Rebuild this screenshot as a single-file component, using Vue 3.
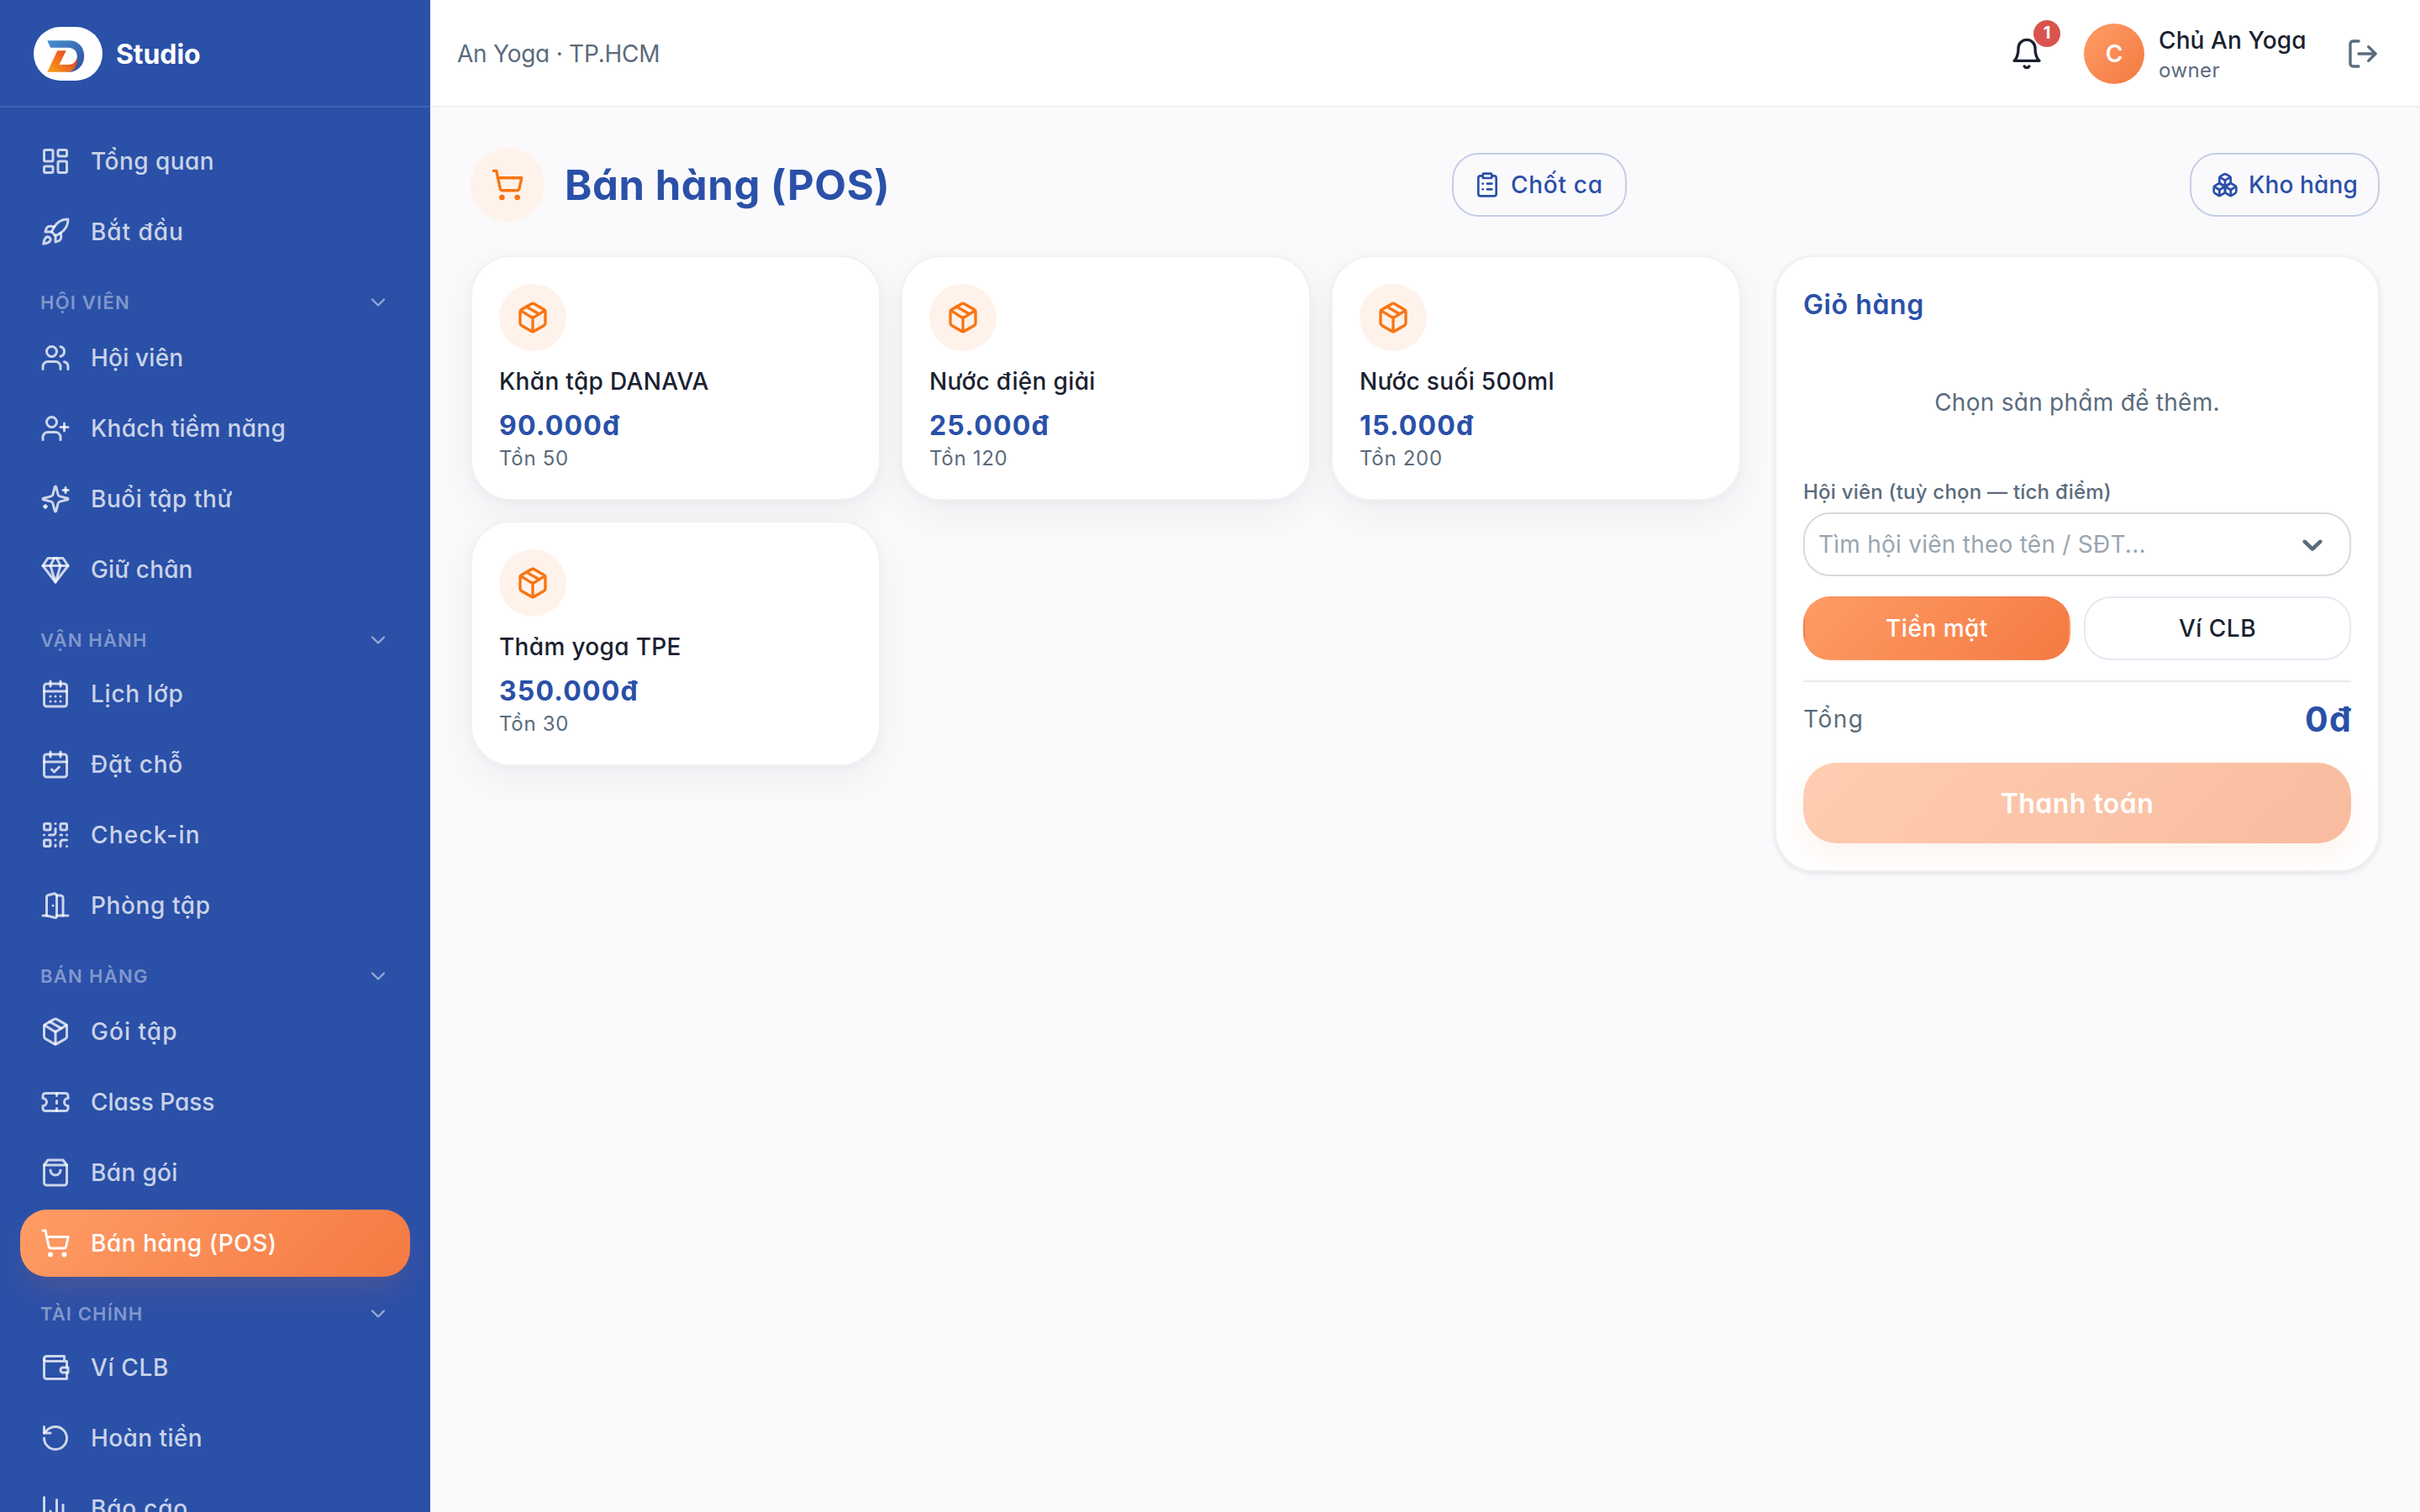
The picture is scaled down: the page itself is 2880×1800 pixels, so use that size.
<script setup>
const dot = (x, y) => `M${x} ${y}h.01`

const icons = {
  dashboard: ['M4 3h5a1 1 0 0 1 1 1v7a1 1 0 0 1-1 1H4a1 1 0 0 1-1-1V4a1 1 0 0 1 1-1z', 'M15 3h5a1 1 0 0 1 1 1v3a1 1 0 0 1-1 1h-5a1 1 0 0 1-1-1V4a1 1 0 0 1 1-1z', 'M15 12h5a1 1 0 0 1 1 1v7a1 1 0 0 1-1 1h-5a1 1 0 0 1-1-1v-7a1 1 0 0 1 1-1z', 'M4 16h5a1 1 0 0 1 1 1v3a1 1 0 0 1-1 1H4a1 1 0 0 1-1-1v-3a1 1 0 0 1 1-1z'],
  rocket: ['M4.5 16.5c-1.5 1.26-2 5-2 5s3.74-.5 5-2c.71-.84.7-2.13-.09-2.91a2.18 2.18 0 0 0-2.91-.09z', 'm12 15-3-3a22 22 0 0 1 2-3.95A12.88 12.88 0 0 1 22 2c0 2.72-.78 7.5-6 11a22.35 22.35 0 0 1-4 2z', 'M9 12H4s.55-3.03 2-4c1.62-1.08 5 0 5 0', 'M12 15v5s3.03-.55 4-2c1.08-1.62 0-5 0-5'],
  users: ['M16 21v-2a4 4 0 0 0-4-4H6a4 4 0 0 0-4 4v2', 'M13 7a4 4 0 1 1-8 0 4 4 0 0 1 8 0z', 'M22 21v-2a4 4 0 0 0-3-3.87', 'M16 3.13a4 4 0 0 1 0 7.75'],
  userPlus: ['M16 21v-2a4 4 0 0 0-4-4H6a4 4 0 0 0-4 4v2', 'M13 7a4 4 0 1 1-8 0 4 4 0 0 1 8 0z', 'M19 8v6', 'M22 11h-6'],
  sparkles: ['M9.937 15.5A2 2 0 0 0 8.5 14.063l-6.135-1.582a.5.5 0 0 1 0-.962L8.5 9.936A2 2 0 0 0 9.937 8.5l1.582-6.135a.5.5 0 0 1 .963 0L14.063 8.5A2 2 0 0 0 15.5 9.937l6.135 1.581a.5.5 0 0 1 0 .964L15.5 14.063a2 2 0 0 0-1.437 1.437l-1.582 6.135a.5.5 0 0 1-.963 0z', 'M20 3v4', 'M22 5h-4', 'M4 17v2', 'M5 18H3'],
  gem: ['M6 3h12l4 6-10 13L2 9Z', 'M11 3 8 9l4 13 4-13-3-6', 'M2 9h20'],
  calendar: ['M8 2v4', 'M16 2v4', 'M5 4h14a2 2 0 0 1 2 2v14a2 2 0 0 1-2 2H5a2 2 0 0 1-2-2V6a2 2 0 0 1 2-2z', 'M3 10h18', dot(8, 14), dot(12, 14), dot(16, 14), dot(8, 18), dot(12, 18), dot(16, 18)],
  calendarCheck: ['M8 2v4', 'M16 2v4', 'M5 4h14a2 2 0 0 1 2 2v14a2 2 0 0 1-2 2H5a2 2 0 0 1-2-2V6a2 2 0 0 1 2-2z', 'M3 10h18', 'm9 16 2 2 4-4'],
  qr: ['M4 3h3a1 1 0 0 1 1 1v3a1 1 0 0 1-1 1H4a1 1 0 0 1-1-1V4a1 1 0 0 1 1-1z', 'M17 3h3a1 1 0 0 1 1 1v3a1 1 0 0 1-1 1h-3a1 1 0 0 1-1-1V4a1 1 0 0 1 1-1z', 'M4 16h3a1 1 0 0 1 1 1v3a1 1 0 0 1-1 1H4a1 1 0 0 1-1-1v-3a1 1 0 0 1 1-1z', 'M21 16h-3a2 2 0 0 0-2 2v3', 'M21 21v.01', 'M12 7v3a2 2 0 0 1-2 2H7', 'M3 12h.01', 'M12 3h.01', 'M12 16v.01', 'M16 12h1', 'M21 12v.01', 'M12 21v-1'],
  door: ['M13 4h3a2 2 0 0 1 2 2v14', 'M2 20h3', 'M13 20h9', 'M10 12v.01', 'M13 4.562v16.157a1 1 0 0 1-1.242.97L5 20V5.562a2 2 0 0 1 1.515-1.94l4-1A2 2 0 0 1 13 4.561Z'],
  box: ['M11 21.73a2 2 0 0 0 2 0l7-4A2 2 0 0 0 21 16V8a2 2 0 0 0-1-1.73l-7-4a2 2 0 0 0-2 0l-7 4A2 2 0 0 0 3 8v8a2 2 0 0 0 1 1.73z', 'M12 22V12', 'm3.3 7 7.703 4.734a2 2 0 0 0 1.994 0L20.7 7', 'm7.5 4.27 9 5.15'],
  ticket: ['M2 9a3 3 0 0 1 0 6v2a2 2 0 0 0 2 2h16a2 2 0 0 0 2-2v-2a3 3 0 0 1 0-6V7a2 2 0 0 0-2-2H4a2 2 0 0 0-2 2Z', 'M13 5v2', 'M13 17v2', 'M13 11v2'],
  bag: ['M6 2 3 6v14a2 2 0 0 0 2 2h14a2 2 0 0 0 2-2V6l-3-4Z', 'M3 6h18', 'M16 10a4 4 0 0 1-8 0'],
  cart: ['M9 21a1 1 0 1 1-2 0 1 1 0 0 1 2 0z', 'M20 21a1 1 0 1 1-2 0 1 1 0 0 1 2 0z', 'M2.05 2.05h2l2.66 12.42a2 2 0 0 0 2 1.58h9.78a2 2 0 0 0 1.95-1.57l1.65-7.43H5.12'],
  wallet: ['M21 12V7H5a2 2 0 0 1 0-4h14v4', 'M3 5v14a2 2 0 0 0 2 2h16v-5', 'M18 12a2 2 0 0 0 0 4h4v-4Z'],
  undo: ['M3 12a9 9 0 1 0 9-9 9.75 9.75 0 0 0-6.74 2.74L3 8', 'M3 3v5h5'],
  chart: ['M3 3v16a2 2 0 0 0 2 2h16', 'M18 17V9', 'M13 17V5', 'M8 17v-3'],
  chevron: ['m6 9 6 6 6-6'],
  bell: ['M6 8a6 6 0 0 1 12 0c0 7 3 9 3 9H3s3-2 3-9', 'M10.3 21a1.94 1.94 0 0 0 3.4 0'],
  logout: ['M9 21H5a2 2 0 0 1-2-2V5a2 2 0 0 1 2-2h4', 'm16 17 5-5-5-5', 'M21 12H9'],
  clipboard: ['M9 2h6a1 1 0 0 1 1 1v2a1 1 0 0 1-1 1H9a1 1 0 0 1-1-1V3a1 1 0 0 1 1-1z', 'M16 4h2a2 2 0 0 1 2 2v14a2 2 0 0 1-2 2H6a2 2 0 0 1-2-2V6a2 2 0 0 1 2-2h2', 'M12 11h4', 'M12 16h4', 'M8 11h.01', 'M8 16h.01'],
  boxes: ['M2.97 12.92A2 2 0 0 0 2 14.63v3.24a2 2 0 0 0 .97 1.71l3 1.8a2 2 0 0 0 2.06 0L12 19v-5.5l-5-3-4.03 2.42Z', 'm7 16.5-4.74-2.85', 'm7 16.5 5-3', 'M7 16.5v5.17', 'M12 13.5V19l3.97 2.38a2 2 0 0 0 2.06 0l3-1.8a2 2 0 0 0 .97-1.71v-3.24a2 2 0 0 0-.97-1.71L17 10.5l-5 3Z', 'm17 16.5-5-3', 'm17 16.5 4.74-2.85', 'M17 16.5v5.17', 'M7.97 4.42A2 2 0 0 0 7 6.13v4.37l5 3 5-3V6.13a2 2 0 0 0-.97-1.71l-3-1.8a2 2 0 0 0-2.06 0l-3 1.8Z', 'M12 8 7.26 5.15', 'm12 8 4.74-2.85', 'M12 13.5V8'],
}

// ls: tracking in px for each label
const groups = [
  { items: [
    { label: 'Tổng quan', icon: 'dashboard', ls: 0.45 },
    { label: 'Bắt đầu', icon: 'rocket', ls: 0.95 },
  ] },
  { title: 'HỘI VIÊN', ls: 1.23, items: [
    { label: 'Hội viên', icon: 'users', ls: 0.2 },
    { label: 'Khách tiềm năng', icon: 'userPlus', ls: 0.3 },
    { label: 'Buổi tập thử', icon: 'sparkles', ls: 0.55 },
    { label: 'Giữ chân', icon: 'gem', ls: 0.16 },
  ] },
  { title: 'VẬN HÀNH', ls: 1.18, items: [
    { label: 'Lịch lớp', icon: 'calendar', ls: 0.75 },
    { label: 'Đặt chỗ', icon: 'calendarCheck', ls: 0.8 },
    { label: 'Check-in', icon: 'qr', ls: 1.2 },
    { label: 'Phòng tập', icon: 'door', ls: 0.6 },
  ] },
  { title: 'BÁN HÀNG', ls: 1.3, items: [
    { label: 'Gói tập', icon: 'box', ls: 1.05 },
    { label: 'Class Pass', icon: 'ticket', ls: -0.04 },
    { label: 'Bán gói', icon: 'bag', ls: 0.35 },
    { label: 'Bán hàng (POS)', icon: 'cart', ls: 0.54, active: true },
  ] },
  { title: 'TÀI CHÍNH', ls: 1.13, items: [
    { label: 'Ví CLB', icon: 'wallet', ls: 0.65 },
    { label: 'Hoàn tiền', icon: 'undo', ls: 0.42 },
    { label: 'Báo cáo', icon: 'chart', ls: 0.8 },
  ] },
]

const products = [
  { name: 'Khăn tập DANAVA', price: '90.000đ', stock: 50 },
  { name: 'Nước điện giải', price: '25.000đ', stock: 120 },
  { name: 'Nước suối 500ml', price: '15.000đ', stock: 200 },
  { name: 'Thảm yoga TPE', price: '350.000đ', stock: 30 },
]
</script>

<template>
  <div class="app">
    <aside class="sidebar">
      <div class="brand">
        <span class="logo">
          <svg viewBox="0 0 82 64" width="82" height="64">
            <defs>
              <linearGradient id="lgBlue" x1="0" y1="0" x2="1" y2="1">
                <stop offset="0" stop-color="#4690cf" />
                <stop offset="0.55" stop-color="#3a6db3" />
                <stop offset="1" stop-color="#2c4d9c" />
              </linearGradient>
              <linearGradient id="lgOrange" x1="0" y1="0.9" x2="1" y2="0.3">
                <stop offset="0" stop-color="#f6a01a" />
                <stop offset="0.5" stop-color="#f0701f" />
                <stop offset="1" stop-color="#e63d25" />
              </linearGradient>
            </defs>
            <path d="M16.3 16.3H42C53 16.3 60.2 24 60.2 34.5C60.2 45.5 52.5 53.8 42 53.8L41 48C48 45.5 52 40 51.8 35C51.5 28.5 47.5 24.8 41 24.8H20Z" fill="url(#lgBlue)" />
            <path d="M28.3 28.3H38.8L30.5 45H42C47 45 51 41 51.8 36.5C52.8 45 47.5 53.8 41 53.8H16.3Z" fill="url(#lgOrange)" />
          </svg>
        </span>
        <span class="brand-name">Studio</span>
      </div>
      <nav class="nav">
        <div v-for="(g, gi) in groups" :key="gi" class="group">
          <div v-if="g.title" class="group-head">
            <span :style="{ letterSpacing: g.ls + 'px' }">{{ g.title }}</span>
            <svg class="ico" viewBox="0 0 24 24" width="28" height="28"><path :d="icons.chevron[0]" /></svg>
          </div>
          <a v-for="it in g.items" :key="it.label" class="item" :class="{ active: it.active }">
            <svg class="ico" viewBox="0 0 24 24" width="36" height="36"><path v-for="d in icons[it.icon]" :key="d" :d="d" /></svg>
            <span :style="{ letterSpacing: it.ls + 'px' }">{{ it.label }}</span>
          </a>
        </div>
      </nav>
    </aside>

    <div class="main">
      <header class="topbar">
        <span class="branch">An Yoga · TP.HCM</span>
        <div class="tools">
          <span class="bell">
            <svg class="ico" viewBox="0 0 24 24" width="40" height="40"><path v-for="d in icons.bell" :key="d" :d="d" /></svg>
            <span class="badge">1</span>
          </span>
          <span class="avatar">C</span>
          <div class="who">
            <span class="who-name">Chủ An Yoga</span>
            <span class="who-role">owner</span>
          </div>
          <svg class="ico logout" viewBox="0 0 24 24" width="40" height="40"><path v-for="d in icons.logout" :key="d" :d="d" /></svg>
        </div>
      </header>

      <main class="content">
        <div class="page-head">
          <div class="title">
            <span class="title-icon">
              <svg class="ico" viewBox="0 0 24 24" width="40" height="40"><path v-for="d in icons.cart" :key="d" :d="d" /></svg>
            </span>
            <h1>Bán hàng (POS)</h1>
          </div>
          <button class="outline shift">
            <svg class="ico" viewBox="0 0 24 24" width="32" height="32"><path v-for="d in icons.clipboard" :key="d" :d="d" /></svg>
            <span>Chốt ca</span>
          </button>
          <button class="outline store">
            <svg class="ico" viewBox="0 0 24 24" width="32" height="32"><path v-for="d in icons.boxes" :key="d" :d="d" /></svg>
            <span>Kho hàng</span>
          </button>
        </div>

        <div class="columns">
          <section class="grid">
            <article v-for="p in products" :key="p.name" class="card">
              <span class="card-icon">
                <svg class="ico" viewBox="0 0 24 24" width="40" height="40"><path v-for="d in icons.box" :key="d" :d="d" /></svg>
              </span>
              <div class="p-name">{{ p.name }}</div>
              <div class="p-price">{{ p.price }}</div>
              <div class="p-stock">Tồn {{ p.stock }}</div>
            </article>
          </section>

          <section class="cart">
            <h2>Giỏ hàng</h2>
            <div class="empty">Chọn sản phẩm để thêm.</div>
            <label class="field-label">Hội viên (tuỳ chọn — tích điểm)</label>
            <div class="select">
              <span>Tìm hội viên theo tên / SĐT...</span>
              <svg viewBox="0 0 20 20" width="40" height="40" fill="#5b6b7c"><path d="M4.516 7.548c0.436-0.446 1.043-0.481 1.576 0l3.908 3.747 3.908-3.747c0.533-0.481 1.141-0.446 1.574 0 0.436 0.445 0.408 1.197 0 1.615-0.406 0.418-4.695 4.502-4.695 4.502-0.217 0.223-0.502 0.335-0.787 0.335s-0.570-0.112-0.789-0.335c0 0-4.287-4.084-4.695-4.502s-0.436-1.170 0-1.615z" /></svg>
            </div>
            <div class="methods">
              <button class="method on">Tiền mặt</button>
              <button class="method">Ví CLB</button>
            </div>
            <div class="total">
              <span class="total-label">Tổng</span>
              <span class="total-value">0đ</span>
            </div>
            <button class="pay">Thanh toán</button>
          </section>
        </div>
      </main>
    </div>
  </div>
</template>

<style>
body { margin: 0; overflow: hidden; }
</style>

<style scoped>
* { box-sizing: border-box; }
.app {
  display: flex;
  width: 2880px;
  height: 1800px;
  overflow: hidden;
  background: #fafafc;
  font-family: Inter, "Noto Sans", sans-serif;
  font-feature-settings: "cv11";
  font-size: 28px;
  color: #1a2130;
}
button { font: inherit; font-feature-settings: inherit; color: inherit; margin: 0; padding: 0; background: none; }
svg { display: block; flex: none; }
.ico { fill: none; stroke: currentColor; stroke-width: 2; stroke-linecap: round; stroke-linejoin: round; }

.sidebar { width: 512px; height: 1800px; flex: none; background: #2a50a8; overflow: hidden; }
.brand { height: 128px; border-bottom: 2px solid rgba(255, 255, 255, 0.1); display: flex; align-items: center; gap: 16px; padding: 2px 0 0 40px; }
.logo { width: 82px; height: 64px; border-radius: 32px; background: #fff; }
.brand-name { font-size: 32px; font-weight: 700; color: #fff; letter-spacing: -0.09px; }
.nav { padding: 24px 24px 0; }
.group { display: flex; flex-direction: column; gap: 4px; }
.group-head { height: 66px; padding: 26px 24px 0; display: flex; justify-content: space-between; align-items: flex-start; font-size: 22px; font-weight: 600; line-height: 36px; color: rgba(255, 255, 255, 0.42); }
.group:nth-child(odd) .group-head { height: 64px; }
.group-head .ico { margin-top: 4px; color: rgba(255, 255, 255, 0.5); }
.item { height: 80px; border-radius: 32px; padding: 0 24px; display: flex; align-items: center; gap: 24px; font-weight: 500; color: rgba(255, 255, 255, 0.76); white-space: nowrap; }
.item.active { color: #fff; background: linear-gradient(135deg, #ff9c66, #f47a42); box-shadow: 0 20px 40px -8px rgba(244, 122, 66, 0.18); }

.main { flex: 1; min-width: 0; display: flex; flex-direction: column; }
.topbar { height: 128px; flex: none; background: #fff; border-bottom: 2px solid #f0f0f2; padding: 2px 48px 0 32px; display: flex; align-items: center; justify-content: space-between; }
.branch { color: #5b6b7c; letter-spacing: -0.24px; }
.tools { display: flex; align-items: center; }
.bell { position: relative; width: 40px; height: 40px; margin-right: 48px; }
.badge { position: absolute; left: 28px; top: -20px; width: 32px; height: 32px; border-radius: 16px; background: #d9534f; color: #fff; font-size: 20px; font-weight: 700; line-height: 30px; text-align: center; }
.avatar { width: 72px; height: 72px; border-radius: 36px; background: linear-gradient(135deg, #ff9c66, #f47a42); color: #fff; font-weight: 600; line-height: 72px; text-align: center; }
.who { display: flex; flex-direction: column; width: 224px; padding-left: 17px; }
.who-name { font-weight: 500; line-height: 40px; letter-spacing: 0.1px; }
.who-role { font-size: 24px; line-height: 32px; color: #5b6b7c; letter-spacing: 0.43px; }
.logout { margin-left: 16px; color: #5b6b7c; }

.content { padding: 48px; display: flex; flex-direction: column; gap: 40px; }
.page-head { display: flex; align-items: center; justify-content: space-between; }
.title { display: flex; align-items: center; gap: 24px; }
.title-icon { width: 88px; height: 88px; border-radius: 44px; background: #fff2ea; color: #f97410; display: flex; align-items: center; justify-content: center; }
h1 { margin: 0; width: 386px; padding-top: 2px; font-size: 49px; line-height: 60px; font-weight: 700; color: #2a50a8; letter-spacing: 0.58px; white-space: nowrap; }
.outline { height: 76px; border: 2px solid #c5cee8; border-radius: 32px; padding-left: 24px; display: flex; align-items: center; gap: 12px; color: #2a50a8; font-weight: 500; white-space: nowrap; }
.shift { width: 208px; letter-spacing: 0.7px; }
.store { width: 226px; letter-spacing: 0.16px; }

.columns { display: flex; align-items: flex-start; gap: 40px; }
.grid { width: 1512px; display: grid; grid-template-columns: repeat(3, 1fr); gap: 24px; }
.card { height: 292px; padding: 32px; border: 2px solid #f1f1f3; border-radius: 48px; background: #fff; box-shadow: 0 16px 48px rgba(20, 30, 50, 0.05), 0 4px 12px rgba(20, 30, 50, 0.03); }
.card-icon { width: 80px; height: 80px; border-radius: 40px; background: #fff2ea; color: #f97410; display: flex; align-items: center; justify-content: center; }
.p-name { margin-top: 16px; line-height: 40px; font-weight: 500; letter-spacing: 0.33px; }
.p-price { margin-top: 11px; font-size: 32px; line-height: 44px; font-weight: 700; color: #2a50a8; letter-spacing: 1.18px; }
.p-stock { font-size: 24px; line-height: 34px; color: #5b6b7c; letter-spacing: 0.7px; }

.cart { width: 720px; padding: 32px; border: 2px solid #f1f1f2; border-radius: 48px; background: #fff; box-shadow: 0 2px 6px rgba(20, 30, 50, 0.1); }
h2 { margin: 0; padding-top: 1px; font-size: 32px; line-height: 48px; font-weight: 600; color: #2a50a8; letter-spacing: 0.6px; }
.empty { line-height: 184px; text-align: center; color: #5b6b7c; letter-spacing: 0.27px; }
.field-label { display: block; font-size: 24px; line-height: 30px; font-weight: 500; color: #5b6b7c; letter-spacing: 0.22px; }
.select { margin-top: 9px; height: 76px; border: 2px solid #d9dadc; border-radius: 32px; padding: 0 24px 0 16px; display: flex; align-items: center; justify-content: space-between; color: #9aa5b0; letter-spacing: 0.25px; }
.methods { margin-top: 24px; display: grid; grid-template-columns: 1fr 1fr; gap: 16px; }
.method { height: 76px; border: 2px solid #e4e9f2; border-radius: 32px; font-weight: 500; letter-spacing: 0.5px; }
.method.on { border-color: transparent; color: #fff; background: linear-gradient(135deg, #ff9c66, #f47a42); }
.total { margin-top: 24px; height: 90px; border-top: 2px solid #e6ebef; display: flex; align-items: center; justify-content: space-between; }
.total-label { color: #5b6b7c; letter-spacing: 1.5px; }
.total-value { font-size: 41px; font-weight: 700; color: #2a50a8; letter-spacing: 1.2px; margin-right: -1px; }
.pay { display: block; width: 100%; height: 96px; margin-top: 8px; border: 0; border-radius: 40px; background: linear-gradient(135deg, #ff9c66, #f47a42); color: #fff; font-size: 32px; font-weight: 600; letter-spacing: 0.46px; opacity: 0.5; box-shadow: 0 16px 32px rgba(244, 122, 66, 0.14); }
</style>
